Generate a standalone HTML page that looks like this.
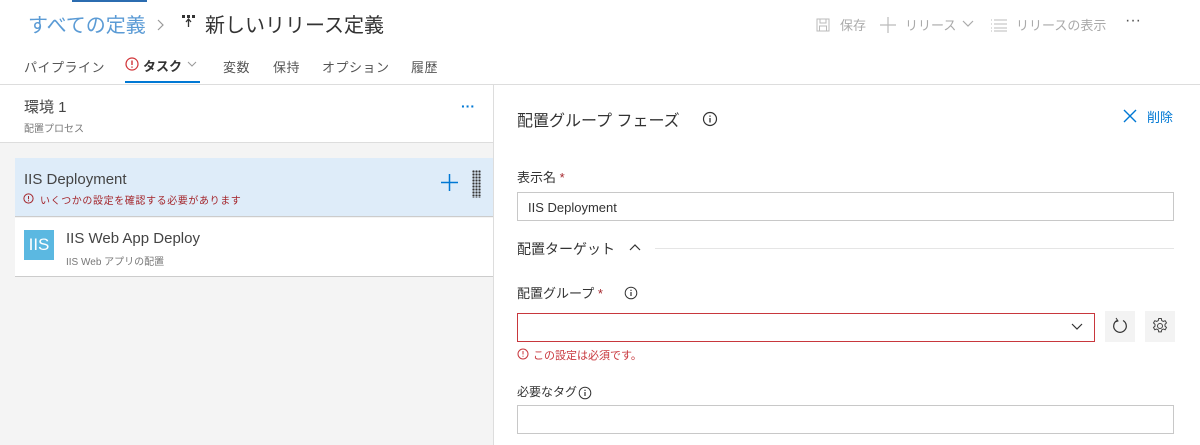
<!DOCTYPE html>
<html><head><meta charset="utf-8"><style>
*{margin:0;padding:0;box-sizing:border-box}
body{width:1200px;height:445px;overflow:hidden;background:#fff;font-family:"Liberation Sans","Noto Sans CJK JP",sans-serif;color:#333;position:relative}
.a{position:absolute;white-space:nowrap}
.inp{position:absolute;border:1px solid #c8c8c8;background:#fff}
.tb{position:absolute;top:15px;font-size:13px;color:#aaa;white-space:nowrap}
.tab{position:absolute;top:57px;font-size:13px;color:#555;letter-spacing:0.5px}
</style></head><body>
<div class="a" style="left:72px;top:0;width:75px;height:2px;background:#2b6cb0"></div>
<div class="a" style="left:28px;top:9px;font-size:20px;color:#5b9bd5">すべての定義</div>
<svg class="a" style="left:156px;top:18px" width="10" height="14"><path d="M2 2l5 5-5 5" stroke="#999" fill="none" stroke-width="1.2"/></svg>
<svg class="a" style="left:181px;top:14px" width="14" height="14"><rect x="1" y="1" width="3" height="3" fill="#333"/><rect x="6" y="1" width="3" height="3" fill="#333"/><rect x="11" y="1" width="3" height="3" fill="#333"/><path d="M7.5 5v8M5 8l2.5-3 2.5 3" stroke="#333" fill="none" stroke-width="1.3"/></svg>
<div class="a" style="left:205px;top:9px;font-size:20px;color:#333">新しいリリース定義</div>
<svg class="a" style="left:816px;top:18px" width="14" height="14"><rect x="1" y="1" width="12" height="12" fill="none" stroke="#bbb"/><rect x="4" y="1" width="6" height="4" fill="none" stroke="#bbb"/><rect x="3.5" y="8" width="7" height="5" fill="none" stroke="#bbb"/></svg>
<div class="tb" style="left:840px">保存</div>
<svg class="a" style="left:880px;top:16px" width="16" height="18"><path d="M8 1v16M0 9h16" stroke="#bbb" stroke-width="1.2"/></svg>
<div class="tb" style="left:905px">リリース</div>
<svg class="a" style="left:962px;top:20px" width="12" height="8"><path d="M1 1l5 5 5-5" stroke="#aaa" fill="none" stroke-width="1.2"/></svg>
<svg class="a" style="left:991px;top:18px" width="16" height="14"><path d="M0 2h1M3 2h13M0 6h1M3 6h13M0 10h1M3 10h13M0 13h1M3 13h13" stroke="#bbb"/></svg>
<div class="tb" style="left:1016px">リリースの表示</div>
<div class="a" style="left:1125px;top:12px;font-size:16px;color:#555">···</div>
<div class="tab" style="left:24px">パイプライン</div>
<svg class="a" style="left:125px;top:57px" width="14" height="14"><circle cx="7" cy="7" r="6" fill="none" stroke="#d13438" stroke-width="1.2"/><path d="M7 3.5v4.5M7 9.5v1.3" stroke="#d13438" stroke-width="1.4"/></svg>
<div class="a" style="left:143px;top:56px;font-size:13px;font-weight:bold;color:#333">タスク</div>
<svg class="a" style="left:187px;top:61px" width="10" height="7"><path d="M1 1l4 4 4-4" stroke="#999" fill="none"/></svg>
<div class="a" style="left:125px;top:81px;width:75px;height:2px;background:#0078d4"></div>
<div class="tab" style="left:223px">変数</div>
<div class="tab" style="left:273px">保持</div>
<div class="tab" style="left:322px">オプション</div>
<div class="tab" style="left:411px">履歴</div>
<div class="a" style="left:0;top:84px;width:1200px;height:1px;background:#ddd"></div>
<div class="a" style="left:0;top:85px;width:493px;height:360px;background:#f4f4f4"></div>
<div class="a" style="left:0;top:85px;width:493px;height:58px;background:#fff;border-bottom:1px solid #ddd"></div>
<div class="a" style="left:493px;top:85px;width:1px;height:360px;background:#ddd"></div>
<div class="a" style="left:24px;top:96px;font-size:15px;color:#444">環境 1</div>
<div class="a" style="left:24px;top:120px;font-size:10px;color:#777">配置プロセス</div>
<div class="a" style="left:461px;top:98px;font-size:14px;color:#0078d4;font-weight:bold">···</div>
<div class="a" style="left:15px;top:158px;width:478px;height:59px;background:#deecf9;border-bottom:1px solid #ccc"></div>
<div class="a" style="left:24px;top:171px;font-size:15px;color:#444">IIS Deployment</div>
<svg class="a" style="left:23px;top:193px" width="11" height="11"><circle cx="5.5" cy="5.5" r="4.6" fill="none" stroke="#a4262c"/><path d="M5.5 3v3.2M5.5 7.3v1" stroke="#a4262c"/></svg>
<div class="a" style="left:40px;top:192px;font-size:10px;color:#a4262c;letter-spacing:0.6px">いくつかの設定を確認する必要があります</div>
<svg class="a" style="left:441px;top:174px" width="17" height="17"><path d="M8.5 0v17M0 8.5h17" stroke="#0078d4" stroke-width="1.5"/></svg>
<div class="a" style="left:472px;top:170px;width:9px;height:28px;background:radial-gradient(circle,#333 1px,transparent 1.3px) 0 0/3px 3px"></div>
<div class="a" style="left:15px;top:218px;width:478px;height:59px;background:#fff;border-bottom:1px solid #ccc"></div>
<div class="a" style="left:24px;top:230px;width:30px;height:30px;background:#5bb8e1;color:#fff;font-size:17px;text-align:center;line-height:30px;font-weight:300">IIS</div>
<div class="a" style="left:66px;top:230px;font-size:15px;color:#444">IIS Web App Deploy</div>
<div class="a" style="left:66px;top:253px;font-size:10px;color:#777">IIS Web アプリの配置</div>
<div class="a" style="left:517px;top:107px;font-size:16px;color:#333">配置グループ フェーズ</div>
<svg class="a" style="left:702px;top:111px" width="16" height="16"><circle cx="8" cy="8" r="6.5" fill="none" stroke="#333" stroke-width="1.2"/><path d="M8 7v4.5M8 4.5v1.3" stroke="#333" stroke-width="1.3"/></svg>
<svg class="a" style="left:1123px;top:109px" width="14" height="14"><path d="M1 1l12 12M13 1L1 13" stroke="#0078d4" stroke-width="1.4"/></svg>
<div class="a" style="left:1147px;top:107px;font-size:13px;color:#0078d4">削除</div>
<div class="a" style="left:517px;top:167px;font-size:13px;color:#333">表示名 <span style="color:#a4262c">*</span></div>
<div class="inp" style="left:517px;top:192px;width:657px;height:29px;font-size:13px;padding:7px 10px">IIS Deployment</div>
<div class="a" style="left:517px;top:239px;font-size:14px;color:#333">配置ターゲット</div>
<svg class="a" style="left:629px;top:243px" width="12" height="8"><path d="M1 7l5-5 5 5" stroke="#333" fill="none" stroke-width="1.2"/></svg>
<div class="a" style="left:655px;top:248px;width:519px;height:1px;background:#e5e5e5"></div>
<div class="a" style="left:517px;top:283px;font-size:13px;color:#333">配置グループ <span style="color:#a4262c">*</span></div>
<svg class="a" style="left:624px;top:286px" width="14" height="14"><circle cx="7" cy="7" r="5.8" fill="none" stroke="#333"/><path d="M7 6v4M7 3.8v1.2" stroke="#333" stroke-width="1.2"/></svg>
<div class="inp" style="left:517px;top:313px;width:578px;height:29px;border-color:#c8373d"></div>
<svg class="a" style="left:1071px;top:322px" width="12" height="10"><path d="M1 2l5 5 5-5" stroke="#333" fill="none" stroke-width="1.2"/></svg>
<div class="a" style="left:1105px;top:311px;width:30px;height:31px;background:#f3f3f3"></div>
<svg class="a" style="left:1110px;top:316px" width="20" height="20"><path d="M7 4.5A6.3 6.3 0 1 0 13 4.5" fill="none" stroke="#333" stroke-width="1.2"/><path d="M6 2l2 3-3 1" fill="none" stroke="#333"/></svg>
<div class="a" style="left:1145px;top:311px;width:30px;height:31px;background:#f3f3f3"></div>
<svg class="a" style="left:1151px;top:317px" width="18" height="18"><circle cx="9" cy="9" r="2.5" fill="none" stroke="#444"/><path d="M7.7 1.5h2.6l.4 2 1.6.9 1.9-.7 1.3 2.2-1.5 1.4v1.8l1.5 1.4-1.3 2.2-1.9-.7-1.6.9-.4 2H7.7l-.4-2-1.6-.9-1.9.7-1.3-2.2 1.5-1.4V7.3L2.5 5.9l1.3-2.2 1.9.7 1.6-.9z" fill="none" stroke="#444"/></svg>
<svg class="a" style="left:517px;top:348px" width="12" height="12"><circle cx="6" cy="6" r="5" fill="none" stroke="#c8373d"/><path d="M6 3v3.5M6 7.8v1" stroke="#c8373d"/></svg>
<div class="a" style="left:533px;top:347px;font-size:11px;color:#c8373d">この設定は必須です。</div>
<div class="a" style="left:517px;top:383px;font-size:12px;color:#333">必要なタグ</div>
<svg class="a" style="left:578px;top:386px" width="14" height="14"><circle cx="7" cy="7" r="5.8" fill="none" stroke="#333"/><path d="M7 6v4M7 3.8v1.2" stroke="#333" stroke-width="1.2"/></svg>
<div class="inp" style="left:517px;top:405px;width:657px;height:29px"></div>
</body></html>
